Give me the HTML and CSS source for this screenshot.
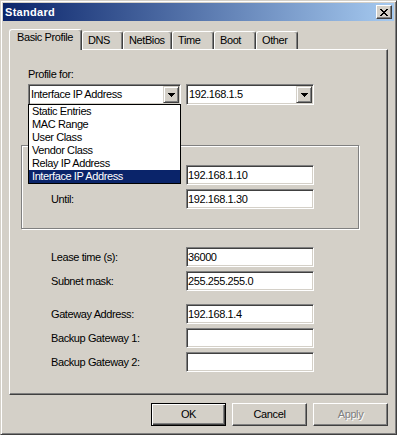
FILE: index.html
```html
<!DOCTYPE html>
<html lang="en">
<head>
  <meta charset="UTF-8" />
  <title>Standard</title>
  <link rel="stylesheet" href="styles.css">
</head>
<body>
  <div class="dialog">
    <div class="titlebar">
      <span class="title">Standard</span>
      <span class="close">
        <svg width="8" height="7" viewBox="0 0 8 7" shape-rendering="crispEdges"><path d="M0 0h2v1h1v1h2v-1h1v-1h2v1h-1v1h-1v1h-1v1h1v1h1v1h1v1h-2v-1h-1v-1h-2v1h-1v1h-2v-1h1v-1h1v-1h1v-1h-1v-1h-1v-1h-1z" fill="#000"/></svg>
      </span>
    </div>

    <div class="tabs">
      <div class="tab active" style="width:73px">Basic Profile</div>
      <div class="tab" style="width:41px">DNS</div>
      <div class="tab" style="width:49px">NetBios</div>
      <div class="tab" style="width:42px">Time</div>
      <div class="tab" style="width:42px">Boot</div>
      <div class="tab" style="width:42px">Other</div>
    </div>

    <div class="panel">
      <div class="profile">
        <div class="profile-label">Profile for:</div>
        <div class="combos">
          <div class="combo wide">
            <span class="combo-text">Interface IP Address</span>
            <span class="arrow"><svg width="7" height="4" viewBox="0 0 7 4" shape-rendering="crispEdges"><path d="M0 0h7v1h-1v1h-1v1h-1v1h-1v-1h-1v-1h-1v-1h-1z" fill="#000"/></svg></span>
            <ul class="droplist">
              <li>Static Entries</li>
              <li>MAC Range</li>
              <li>User Class</li>
              <li>Vendor Class</li>
              <li>Relay IP Address</li>
              <li class="selected">Interface IP Address</li>
            </ul>
          </div>
          <div class="combo">
            <span class="combo-text">192.168.1.5</span>
            <span class="arrow"><svg width="7" height="4" viewBox="0 0 7 4" shape-rendering="crispEdges"><path d="M0 0h7v1h-1v1h-1v1h-1v1h-1v-1h-1v-1h-1v-1h-1z" fill="#000"/></svg></span>
          </div>
        </div>
      </div>

      <div class="group">
        <div class="row">
          <span class="label"></span>
          <div class="field">192.168.1.10</div>
        </div>
        <div class="row">
          <span class="label">Until:</span>
          <div class="field">192.168.1.30</div>
        </div>
      </div>

      <div class="rows lease">
        <div class="row">
          <span class="label">Lease time (s):</span>
          <div class="field">36000</div>
        </div>
        <div class="row">
          <span class="label">Subnet mask:</span>
          <div class="field">255.255.255.0</div>
        </div>
      </div>

      <div class="rows gateways">
        <div class="row">
          <span class="label">Gateway Address:</span>
          <div class="field">192.168.1.4</div>
        </div>
        <div class="row">
          <span class="label">Backup Gateway 1:</span>
          <div class="field"></div>
        </div>
        <div class="row">
          <span class="label">Backup Gateway 2:</span>
          <div class="field"></div>
        </div>
      </div>
    </div>

    <div class="buttons">
      <div class="btn default">OK</div>
      <div class="btn">Cancel</div>
      <div class="btn disabled">Apply</div>
    </div>
  </div>
</body>
</html>
```

FILE: styles.css
```css
body {
  margin: 0;
  font-family: "Liberation Sans", Arial, sans-serif;
  font-size: 11px;
  letter-spacing: -0.4px;
  color: #000;
  background: #d4d0c8;
}
.dialog {
  box-sizing: border-box;
  width: 397px;
  height: 435px;
  padding: 2px;
  background: #d4d0c8;
  border: 1px solid;
  border-color: #d4d0c8 #404040 #404040 #d4d0c8;
  box-shadow: inset 1px 1px #fff, inset -1px -1px #808080;
}
.titlebar {
  height: 18px;
  display: flex;
  align-items: center;
  justify-content: space-between;
  padding: 0 2px 0 2px;
  background: linear-gradient(to right, #0a246a, #a6caf0);
}
.title {
  color: #fff;
  font-weight: bold;
  letter-spacing: 0.3px;
  line-height: 13px;
}
.close {
  box-sizing: border-box;
  width: 16px;
  height: 14px;
  display: flex;
  align-items: center;
  justify-content: center;
  background: #d4d0c8;
  border: 1px solid;
  border-color: #fff #404040 #404040 #fff;
  box-shadow: inset -1px -1px #808080;
}
.tabs {
  display: flex;
  align-items: flex-end;
  height: 20px;
  margin: 8px 0 0 6px;
}
.tab {
  box-sizing: border-box;
  height: 18px;
  padding: 2px 0 0 5px;
  line-height: 13px;
  background: #d4d0c8;
  border: 1px solid;
  border-bottom: none;
  border-color: #fff #404040 #fff #fff;
  border-radius: 3px 3px 0 0;
  box-shadow: inset -1px 0 #808080;
}
.tab.active {
  position: relative;
  z-index: 1;
  height: 21px;
  margin-bottom: -1px;
  padding: 1px 0 0 7px;
}
.panel {
  box-sizing: border-box;
  height: 346px;
  margin: 0 6px;
  padding: 18px 0 0 11px;
  border: 1px solid;
  border-color: #fff #404040 #404040 #fff;
  box-shadow: inset -1px -1px #808080;
}
.profile {
  margin-left: 7px;
}
.profile-label {
  line-height: 13px;
  margin-bottom: 3px;
}
.combos {
  display: flex;
  gap: 5px;
}
.combo,
.field {
  box-sizing: border-box;
  width: 128px;
  background: #fff;
  border: 1px solid;
  border-color: #808080 #fff #fff #808080;
  box-shadow: inset 1px 1px #404040, inset -1px -1px #d4d0c8;
  display: flex;
  align-items: center;
  padding-left: 1px;
  line-height: 13px;
}
.combo {
  position: relative;
  height: 21px;
}
.combo.wide {
  width: 153px;
}
.combo-text {
  padding-left: 1px;
}
.arrow {
  box-sizing: border-box;
  width: 16px;
  height: 17px;
  margin: 0 1px 0 auto;
  display: flex;
  align-items: center;
  justify-content: center;
  background: #d4d0c8;
  border: 1px solid;
  border-color: #d4d0c8 #404040 #404040 #d4d0c8;
  box-shadow: inset 1px 1px #fff, inset -1px -1px #808080;
}
.droplist {
  position: absolute;
  z-index: 2;
  top: 19px;
  left: -1px;
  box-sizing: border-box;
  width: 153px;
  height: 80px;
  margin: 0;
  padding: 0;
  list-style: none;
  background: #fff;
  border: 1px solid #000;
}
.droplist li {
  height: 13px;
  line-height: 13px;
  padding-left: 3px;
}
.droplist li.selected {
  background: #0a246a;
  color: #fff;
}
.field {
  height: 20px;
}
.group {
  box-sizing: border-box;
  width: 338px;
  margin-top: 40px;
  padding: 19px 0 19px 29px;
  border: 1px solid #808080;
  box-shadow: inset 1px 1px #fff, 1px 1px #fff;
}
.row {
  display: flex;
  align-items: center;
}
.row + .row {
  margin-top: 4px;
}
.label {
  width: 135px;
  line-height: 13px;
}
.rows {
  margin-left: 30px;
}
.lease {
  margin-top: 18px;
}
.gateways {
  margin-top: 13px;
}
.buttons {
  display: flex;
  justify-content: flex-end;
  gap: 6px;
  margin: 8px 6px 0 0;
}
.btn {
  box-sizing: border-box;
  width: 75px;
  height: 23px;
  padding-bottom: 2px;
  display: flex;
  align-items: center;
  justify-content: center;
  border: 1px solid;
  border-color: #fff #404040 #404040 #fff;
  box-shadow: inset -1px -1px #808080;
}
.btn.default {
  border-color: #000;
  box-shadow: inset 1px 1px #fff, inset -1px -1px #404040, inset -2px -2px #808080;
}
.btn.disabled {
  color: #808080;
  text-shadow: 1px 1px #fff;
}
```
